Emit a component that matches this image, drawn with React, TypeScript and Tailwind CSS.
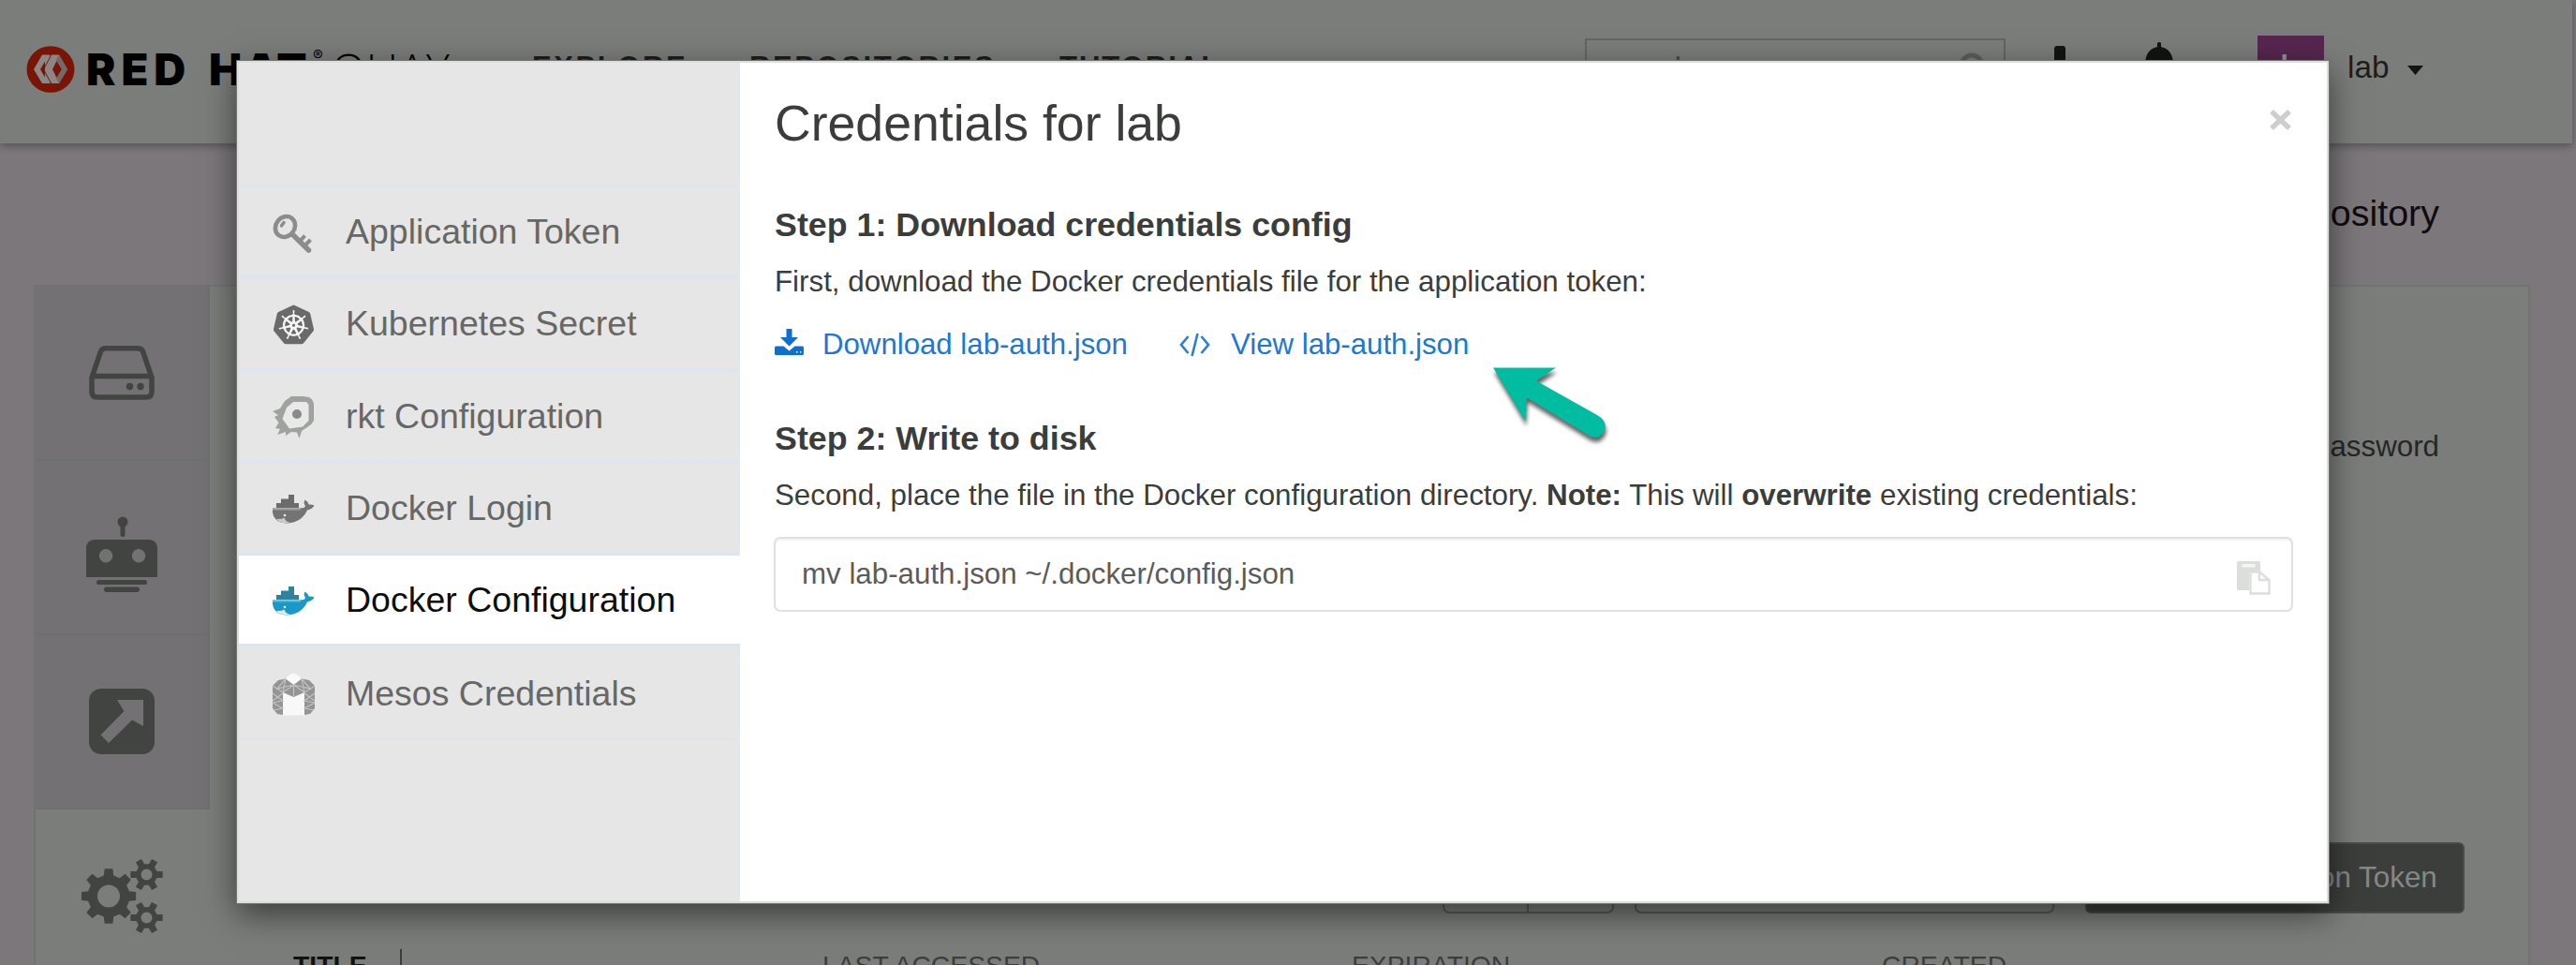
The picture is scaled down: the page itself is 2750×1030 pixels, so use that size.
import React from "react";
import { SiKubernetes } from "react-icons/si";

function gearPath(cx: number, cy: number, outer: number, inner: number, hole: number, teeth: number) {
  const pts: string[] = [];
  const step = (Math.PI * 2) / teeth;
  const at = (r: number, a: number) => `${(cx + r * Math.cos(a)).toFixed(2)} ${(cy + r * Math.sin(a)).toFixed(2)}`;
  for (let i = 0; i < teeth; i++) {
    const a = i * step;
    pts.push(at(inner, a - step * 0.3), at(outer, a - step * 0.19), at(outer, a + step * 0.19), at(inner, a + step * 0.3));
  }
  return `M${pts.join("L")}Z M${cx - hole} ${cy}a${hole} ${hole} 0 1 0 ${hole * 2} 0a${hole} ${hole} 0 1 0 ${-hole * 2} 0Z`;
}

const BrandMark = () => (
  <svg className="mt-[49px] h-[50px] w-[52px] shrink-0" viewBox="0 0 52 50">
    <ellipse cx="26" cy="25" rx="25.500" ry="24.800" fill="#7a1505" />
    <path d="M17 9.500H25L26 11.500 27 9.500H35L44 25 35 40H27L26 38 25 40H17L8 25Z" fill="#8b8786" />
    <path d="M35 9.500 44 25 35 40 32 35 38.500 25 32 15Z" fill="#6f6b6a" />
    <path d="M20 16.500V33.500L15 25ZM32.500 16 38 25 32.500 34 28 25Z" fill="#7a1505" />
    <path d="M26 11 18.500 25 26 39" fill="none" stroke="#7a1505" strokeWidth="1" />
  </svg>
);

const DriveIcon = () => (
  <svg width="70" height="58" viewBox="0 0 70 58" fill="none" stroke="#424442" strokeWidth="5.500">
    <path d="M3 34 12.500 6Q14 2.800 18 2.800H52Q56 2.800 57.500 6L67 34V49Q67 55 61 55H9Q3 55 3 49Z" />
    <path d="M3 32.500H67" />
    <circle cx="43.500" cy="43.500" r="3.700" fill="#424442" stroke="none" />
    <circle cx="55" cy="43.500" r="3.700" fill="#424442" stroke="none" />
  </svg>
);

const RobotIcon = () => (
  <svg width="78" height="82" viewBox="0 0 78 82" fill="#424442">
    <circle cx="40" cy="6" r="5.500" />
    <rect x="37.500" y="8" width="5" height="14" rx="2" />
    <path
      fillRule="evenodd"
      d="M10 25H68Q77 25 77 35V65H1V35Q1 25 10 25ZM22 35a7.200 7.200 0 1 0 .1 0ZM57 35a7.200 7.200 0 1 0 .1 0Z"
    />
    <rect x="12" y="68" width="54" height="5" rx="2.500" />
    <rect x="20" y="75.500" width="38" height="5.500" rx="2.700" />
  </svg>
);

const ShareIcon = () => (
  <svg width="70" height="70" viewBox="0 0 70 70">
    <rect width="70" height="70" rx="13" fill="#424442" />
    <path d="M30 12H58V40L46 33.500 21 58 12.500 49.500 37.500 24Z" fill="#737173" />
  </svg>
);

const GearsIcon = () => (
  <svg width="88" height="80" viewBox="0 0 88 80" fill="#424442" fillRule="evenodd">
    <path d={gearPath(29, 39.5, 29.5, 22.5, 12, 8)} />
    <path d={gearPath(69.5, 16.5, 17.5, 11.5, 6, 6)} />
    <path d={gearPath(69.5, 62.5, 17.5, 11.5, 6, 6)} />
  </svg>
);

const KeyIcon = () => (
  <svg width="45" height="45" viewBox="0 0 45 45" fill="none" stroke="#8c8c8c">
    <ellipse cx="13.500" cy="16" rx="10" ry="11.500" transform="rotate(38 13.500 16)" strokeWidth="4.600" />
    <path d="M12 11.500 9.500 15" strokeWidth="3.500" strokeLinecap="round" />
    <path d="M21 24 38.500 41" strokeWidth="5.500" strokeLinecap="round" />
    <path d="M29.500 31 34.500 25.500M34.500 36 40.500 30" strokeWidth="4" />
  </svg>
);

const KubeIcon = () => (
  <span className="grid size-[45px] place-items-center">
    <span className="grid size-[43px] place-items-center rounded-full bg-[radial-gradient(circle,#f6f6f6_55%,transparent_56%)]">
      <SiKubernetes size={43} color="#6a6a6a" />
    </span>
  </span>
);

const RktIcon = () => (
  <svg width="45" height="45" viewBox="0 0 45 45">
    <path
      d="M20 0Q30-1 39 1 43 3 44 8V26Q42 30 37 33L31 37 28.500 45 26 38.500 20 38 14 42 14 38 5 41 8 35 3 34 6.500 28 2 22 6 20 0 16 8 13 13 5Z"
      fill="#a0a2a0"
    />
    <path d="M22 6H36L38.500 9V26L32 32.500 18 34.500 10.500 24 15 12Z" fill="#e9e9e9" />
    <circle cx="26" cy="19" r="5" fill="#8a8a8a" />
  </svg>
);

const WhaleIcon = ({ color }: { color: boolean }) => (
  <svg width="45" height="31" viewBox="0 0 45 31">
    <path d="M4 14V9H9V4.500H17V0H23V9H28V14Z" fill={color ? "#2f829e" : "#6b6b6b"} />
    <path
      d="M0 14.500H29Q34.500 14.500 35 12 32.500 9 34.500 5.500 38 7.500 38.500 10.500 42 10 44.500 11.500 42.500 15.500 37 16.500 31 29.500 16 30.500 2 30.500 0 19Z"
      fill={color ? "#1a98c7" : "#747474"}
    />
    <path d="M0 15.800H30" stroke={color ? "#3fc0e6" : "#9a9a9a"} strokeWidth="1.600" />
    <path d="M4 26Q10 26.500 12.500 24.500 14 29 19 30 8 31.500 4 26Z" fill={color ? "#d8e8ee" : "#c9c9c9"} />
    <circle cx="13" cy="22" r="1.300" fill="#e8eef0" />
  </svg>
);

const MesosIcon = () => (
  <svg width="45" height="46" viewBox="0 0 45 46">
    <path d="M12 8 18 2.500Q22.500-1 27 2.500L33 8 22.500 16Z" fill="#fafafa" />
    <path d="M10 16 22.500 24 34 16V45.500H11Z" fill="#f8f8f8" />
    <path d="M0 14 6 8 14 6.500 22.500 13 31 6.500 39 8 45 14V38L40 44 34 45V21L22.500 26 11 21V45L5 44 0 38Z" fill="#949494" />
    <path
      d="M0 14 11 21 14 6.500 5 17 22.500 13 11 21M0 22 11 30 0 32 11 38 1 40M11 22 0 30M45 14 34 21 31 6.500 40 17 22.500 13 34 21M45 22 34 30 45 32 34 38 44 40M34 22 45 30M22.500 13V25"
      stroke="#c2c2c2"
      strokeWidth="1.200"
      fill="none"
    />
  </svg>
);

const DownloadIcon = () => (
  <svg width="31" height="28" viewBox="0 0 31 28" fill="#0f6fce">
    <path d="M12.500 0H18.500V9H25L15.500 18.500 6 9H12.500Z" />
    <path
      d="M1.500 18.500H9.500L15.500 23.500 21.500 18.500H29.500Q31 18.500 31 20V26.500Q31 28 29.500 28H1.500Q0 28 0 26.500V20Q0 18.500 1.500 18.500ZM23 24V25.500H24.500V24ZM27 24V25.500H28.500V24Z"
      fillRule="evenodd"
    />
  </svg>
);

const CodeIcon = () => (
  <svg width="33" height="26" viewBox="0 0 33 26" fill="none" stroke="#2b7fd3" strokeWidth="2.600">
    <path d="M9.500 4 2 13 9.500 22M23.500 4 31 13 23.500 22M19.500 1 13.500 25" />
  </svg>
);

const PasteIcon = () => (
  <svg width="36" height="36" viewBox="0 0 36 36">
    <path d="M1.500 0H23.500Q25 0 25 1.500V11H13V31H1.500Q0 31 0 29.500V1.500Q0 0 1.500 0Z" fill="#dcdedc" />
    <path d="M5.500 3H19.500V6.500H5.500Z" fill="#f6f6f6" />
    <path d="M14.500 11.500H24L34.500 20V34.500H14.500Z" fill="#fff" stroke="#dcdedc" strokeWidth="2.400" />
    <path d="M24 11.500V20H34.500" fill="none" stroke="#dcdedc" strokeWidth="2.400" />
  </svg>
);

const PointerArrow = () => (
  <svg className="absolute left-[1334px] top-[320px] overflow-visible" width="130" height="90" viewBox="0 0 130 90">
    <path
      d="M5 5.500H72L51 19.500 116 56Q125 61 125 69 123 78 115 80L109 79 41 37.500 39.500 62.500Z"
      fill="#00bda2"
      className="drop-shadow-[1px_5px_2px_rgba(0,0,0,0.6)]"
    />
  </svg>
);

const tabs = [
  { label: "Application Token", icon: <KeyIcon /> },
  { label: "Kubernetes Secret", icon: <KubeIcon /> },
  { label: "rkt Configuration", icon: <RktIcon /> },
  { label: "Docker Login", icon: <WhaleIcon color={false} /> },
  { label: "Docker Configuration", icon: <WhaleIcon color />, active: true },
  { label: "Mesos Credentials", icon: <MesosIcon /> },
];

function Header() {
  return (
    <header className="flex h-[153px] w-[2746px] items-start bg-[#7b7d7b] pl-[28px] shadow-[0_3px_8px_rgba(0,0,0,0.3)]">
      <BrandMark />
      <div className="ml-[12px] mt-[44px] flex h-[60px] items-center whitespace-nowrap font-['Inter'] text-[47px] leading-[60px] text-black">
        <span className="w-[131px] font-black tracking-[6px]">RED</span>
        <span className="w-[111px] font-black tracking-[2px]">HAT</span>
        <span className="w-[20px] self-start pt-[3px] text-[16px] leading-[24px]">®</span>
        <span className="w-[214px] font-['Open_Sans'] text-[47px] font-light tracking-[1px]">QUAY</span>
      </div>
      <nav className="mt-[52px] flex whitespace-nowrap text-[31px] font-bold leading-[40px] tracking-[2.600px] text-[#1c1e1c]">
        <span className="w-[232px]">EXPLORE</span>
        <span className="w-[331px]">REPOSITORIES</span>
        <span className="w-[561px] tracking-[2px]">TUTORIAL</span>
      </nav>
      <div className="mt-[41px] flex h-[64px] w-[449px] items-center justify-between border-2 border-[#636563] pl-[18px] pr-[18px] text-[31px] text-[#454745]">
        <span>search</span>
        <svg width="30" height="34" viewBox="0 0 30 34" fill="none" stroke="#5c5e5c" strokeWidth="5">
          <circle cx="14" cy="14" r="11" />
          <path d="M21 23 28 32" />
        </svg>
      </div>
      <svg className="ml-[42px] mt-[49px]" width="32" height="44" viewBox="0 0 32 44" fill="#121412">
        <rect x="10" width="12" height="44" rx="3" />
        <rect y="17" width="32" height="10" rx="3" />
      </svg>
      <svg className="ml-[73px] mt-[45px]" width="34" height="44" viewBox="0 0 34 44" fill="#121412">
        <path d="M15 1Q17-1 19 1V5Q32 8 32 24L34 36H0L2 24Q2 8 15 5Z" />
      </svg>
      <div className="ml-[88px] mt-[38px] flex h-[71px] w-[71px] items-center justify-center bg-[#572650] text-[46px] leading-none text-[#9a8d98]">L</div>
      <div className="ml-[25px] mt-[52px] flex h-[40px] items-center text-[33.300px] leading-[40px] text-[#1c1e1c]">
        lab
        <svg className="ml-[20px] mt-[6px]" width="17" height="10" viewBox="0 0 17 10" fill="#121412">
          <path d="M0 0H17L8.500 10Z" />
        </svg>
      </div>
    </header>
  );
}

function PageBehind() {
  return (
    <main className="px-[36px]">
      <h2 className="mt-[49px] h-[50px] pr-[110px] text-right text-[39.500px] leading-[50px] text-[#0e0c0e]">Create New Repository</h2>
      <div className="mt-[52px] flex h-[760px] w-[2665px] border-2 border-[#717371] bg-[#7b7d7b]">
        <aside className="w-[186px] shrink-0 border-r-2 border-[#6b7173] text-[#424442]">
          <div className="flex h-[186px] items-center justify-center border-b-2 border-[#6b7173] bg-[#737173]"><DriveIcon /></div>
          <div className="flex h-[186px] items-center justify-center border-b-2 border-[#6b7173] bg-[#737173] pt-[16px]"><RobotIcon /></div>
          <div className="flex h-[186px] items-center justify-center border-b-2 border-[#6b7173] bg-[#737173]"><ShareIcon /></div>
          <div className="-mr-[2px] flex h-[186px] items-center justify-center bg-[#7b7d7b]"><GearsIcon /></div>
        </aside>
        <section className="flex flex-1 flex-col pt-[151px]">
          <div className="h-[40px] pr-[95px] text-right text-[31.300px] leading-[40px] text-[#252725]">Change password</div>
          <div className="mt-[402px] flex h-[76px] shrink-0 justify-end pr-[68px]">
            <div className="mr-[22px] flex w-[183px] rounded-[7px] border-2 border-[#595b59]">
              <span className="w-1/2 border-r-2 border-[#595b59]" />
            </div>
            <div className="mr-[33px] w-[448px] rounded-[7px] border-2 border-[#595b59]" />
            <button className="w-[405px] whitespace-nowrap rounded-[6px] border-2 border-[#4a4c4a] bg-[#3c3e3c] text-[31.400px] text-[#858785]">
              Create Application Token
            </button>
          </div>
          <div className="mt-[38px] grid grid-cols-[565px_565px_566px_500px] pl-[89px] text-[28.300px] leading-[34px] text-[#3c3e3c]">
            <span className="flex font-bold text-[#111311]">
              TITLE
              <i className="ml-[35px] h-[40px] w-[2px] bg-[#3c3e3c]" />
            </span>
            <span>LAST ACCESSED</span>
            <span>EXPIRATION</span>
            <span>CREATED</span>
          </div>
        </section>
      </div>
    </main>
  );
}

function CredentialsDialog() {
  return (
    <div
      role="dialog"
      className="absolute left-[253px] top-[65px] flex h-[899px] w-[2233px] border-2 border-[#dcdedc] bg-white shadow-[0_0_0_1px_#727472,0_11px_33px_rgba(0,0,0,0.55)]"
    >
      <aside className="w-[535px] shrink-0 border-r-2 border-[#dde8f0] bg-[#e6e6e6] pt-[131px]">
        <ul className="border-t-2 border-[#dde6ed]">
          {tabs.map((t) => (
            <li
              key={t.label}
              className={
                t.active
                  ? "-mr-[2px] flex h-[98.300px] items-center border-b-4 border-[#dde6ed] bg-white pl-[36px] text-[#0c0e0c]"
                  : "flex h-[98.300px] items-center border-b-4 border-[#dde6ed] pl-[36px] text-[#666866] last:border-b-2"
              }
            >
              <span className="flex w-[78px] shrink-0 items-center pt-[3px]">{t.icon}</span>
              <span className="whitespace-nowrap text-[37.500px] leading-[44px]">{t.label}</span>
            </li>
          ))}
        </ul>
      </aside>
      <section className="flex-1 pl-[37px] pr-[36px] pt-[34px] text-[31.300px] leading-[40px] text-[#3b3d3b]">
        <div className="flex h-[60px] items-center justify-between">
          <h1 className="text-[53.600px] leading-[60px]">Credentials for lab</h1>
          <svg className="-mt-[7px] mr-[2px]" width="23" height="22" viewBox="0 0 23 22" stroke="#cfcdce" strokeWidth="5.500">
            <path d="M2 2 21 20M21 2 2 20" />
          </svg>
        </div>
        <h2 className="mt-[59px] text-[35.800px] font-bold leading-[40px]">Step 1: Download credentials config</h2>
        <p className="mt-[21px]">First, download the Docker credentials file for the application token:</p>
        <div className="mt-[27px] flex items-center text-[31.200px] text-[#2077d2]">
          <span className="w-[51px] pb-[6px]"><DownloadIcon /></span>
          <span className="w-[381px]">Download lab-auth.json</span>
          <span className="w-[55px]"><CodeIcon /></span>
          <span>View lab-auth.json</span>
        </div>
        <h2 className="mt-[60px] text-[35.800px] font-bold leading-[40px]">Step 2: Write to disk</h2>
        <p className="mt-[21px]">
          Second, place the file in the Docker configuration directory. <b>Note:</b> This will <b>overwrite</b> existing credentials:
        </p>
        <div className="-ml-px mt-[24px] flex h-[80px] items-center justify-between rounded-[7px] border-2 border-[#dfe1df] pl-[28px] pr-[22px] text-[#5a5c5a] shadow-[inset_0_2px_2px_rgba(0,0,0,0.05)]">
          <span>mv lab-auth.json ~/.docker/config.json</span>
          <span className="pt-[8px]"><PasteIcon /></span>
        </div>
      </section>
      <PointerArrow />
    </div>
  );
}

export default function App() {
  return (
    <div className="relative h-[1030px] w-[2750px] overflow-hidden bg-[#7b777b] font-['Liberation_Sans',Arial,sans-serif]">
      <div className="flex flex-col">
        <Header />
        <PageBehind />
      </div>
      <CredentialsDialog />
    </div>
  );
}
